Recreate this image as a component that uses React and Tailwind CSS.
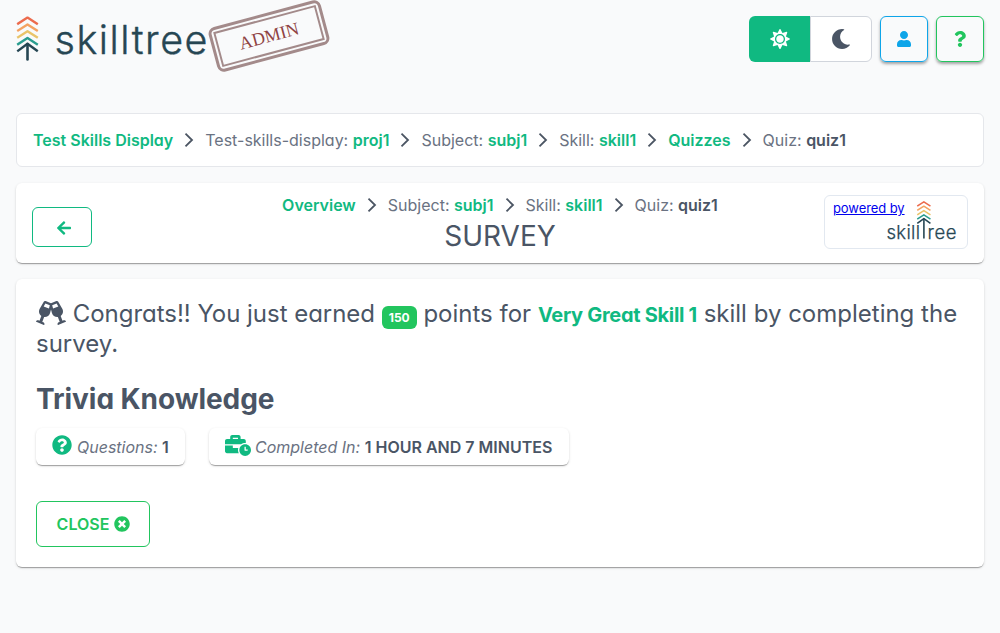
import React from 'react';
import { FaSun, FaMoon, FaUser, FaQuestion, FaArrowLeft, FaQuestionCircle, FaBusinessTime, FaTimesCircle, FaGlassCheers } from 'react-icons/fa';

const CARD = 'bg-white rounded-md shadow-[0_2px_1px_-1px_rgba(0,0,0,0.2),0_1px_1px_0_rgba(0,0,0,0.14),0_1px_3px_0_rgba(0,0,0,0.12)]';

function Chevrons() {
  return (
    <g fill="none" strokeWidth="2.4" strokeLinecap="square" strokeLinejoin="round">
      <path stroke="#ec6b4d" d="M2.2 7.6 L11.5 1.6 L20.8 7.6" />
      <path stroke="#f4a261" d="M2.2 14.4 L11.5 8.4 L20.8 14.4" />
      <path stroke="#e9c46a" d="M2.2 21.2 L11.5 15.2 L20.8 21.2" />
      <path stroke="#2a9d8f" d="M2.2 28 L11.5 22 L20.8 28" />
      <path stroke="#264653" d="M2.2 34.6 L11.5 27.8 L20.8 34.6" />
    </g>
  );
}

function Logo() {
  return (
    <svg width="194" height="48" viewBox="0 0 194 48" className="block shrink-0">
      <Chevrons />
      <path d="M11.5 28 V43.5" stroke="#264653" strokeWidth="2.6" strokeLinecap="round" />
      <text x="38.5" y="37.5" textLength="153" fontSize="39.5" fontWeight="300" fill="#264653" stroke="#264653" strokeWidth="0.4" strokeLinejoin="round" className="font-['Inter']">skilltree</text>
    </svg>
  );
}

function SmallLogo() {
  return (
    <svg width="72" height="42" viewBox="0 0 72 42" className="block">
      <g transform="translate(30.5 0.8) scale(0.64)"><Chevrons /></g>
      <path d="M37.9 18.5 V38.5" stroke="#264653" strokeWidth="1.6" />
      <text x="0.5" y="38.7" textLength="33.5" fontSize="18.5" fontWeight="300" fill="#264653" stroke="#264653" strokeWidth="0.25" className="font-['Inter']">skill</text>
      <text x="41.5" y="38.7" textLength="29" fontSize="18.5" fontWeight="300" fill="#264653" stroke="#264653" strokeWidth="0.25" className="font-['Inter']">ree</text>
    </svg>
  );
}

function Stamp() {
  return (
    <div className="absolute left-[211px] top-[13px] flex h-[46px] w-[116px] -rotate-[15deg] rounded-[7px] border-[3.5px] border-[#a38a8a] p-[2px]">
      <div className="flex flex-1 items-center justify-center border-2 border-[#a38a8a] font-['Liberation_Serif'] text-[18px] leading-none text-[#8f4343]">ADMIN</div>
    </div>
  );
}

function Crumbs({ items }) {
  return (
    <div className="flex items-center leading-6">
      {items.map(([label, value, last], i) => (
        <React.Fragment key={i}>
          {i > 0 && (
            <svg width="10" height="16" viewBox="0 0 10 16" className="mx-[11px]">
              <path d="M1.5 1.7 L8 8 L1.5 14.3" fill="none" stroke="#4b5563" strokeWidth="1.8" />
            </svg>
          )}
          <span className="whitespace-pre text-gray-500">
            {label && label + ' '}
            <span className={last ? 'font-semibold text-gray-600' : 'font-semibold text-[#10b981]'}>{value}</span>
          </span>
        </React.Fragment>
      ))}
    </div>
  );
}

export default function App() {
  return (
    <div className="min-h-[633px] bg-[#f9fafb] px-4 pt-px font-['Inter',sans-serif] text-gray-600 [font-feature-settings:'cv02','cv03','cv04','cv11']">
      <header className="mt-[15px] flex h-[46px] justify-between">
        <div>
          <Logo />
          <Stamp />
        </div>
        <div className="flex gap-2">
          <div className="flex w-[123px]">
            <div className="flex w-[61px] items-center justify-center rounded-l-md bg-[#10b981] text-white"><FaSun size={20} /></div>
            <div className="flex flex-1 items-center justify-center rounded-r-md border border-gray-300 bg-white"><FaMoon size={20} /></div>
          </div>
          <div className="flex w-12 items-center justify-center rounded-md border border-[#0ea5e9] text-[#0ea5e9] shadow-[0_2px_3px_rgba(0,0,0,0.35)]"><FaUser size={16} /></div>
          <div className="flex w-12 items-center justify-center rounded-md border border-[#22c55e] text-[#22c55e] shadow-[0_2px_3px_rgba(0,0,0,0.35)]"><FaQuestion size={16} /></div>
        </div>
      </header>

      <nav className="mt-[51px] flex h-[54px] items-center rounded-md border border-gray-200 bg-white px-4">
        <Crumbs items={[['', 'Test Skills Display'], ['Test-skills-display:', 'proj1'], ['Subject:', 'subj1'], ['Skill:', 'skill1'], ['', 'Quizzes'], ['Quiz:', 'quiz1', true]]} />
      </nav>

      <section className={`${CARD} mt-4 flex h-[80px] justify-between px-4`}>
        <div className="w-36 pt-6">
          <div className="flex h-10 w-[60px] items-center justify-center rounded-md border border-[#10b981] pl-1 pt-px text-[#10b981]"><FaArrowLeft size={16} /></div>
        </div>
        <div className="flex flex-col items-center pt-[10px]">
          <Crumbs items={[['', 'Overview'], ['Subject:', 'subj1'], ['Skill:', 'skill1'], ['Quiz:', 'quiz1', true]]} />
          <h1 className="pt-px text-[28px] leading-9">SURVEY</h1>
        </div>
        <div className="mt-3 flex h-[54px] w-36 rounded-md border border-slate-200 pl-2">
          <span className="pt-[3px] text-[13px] leading-[18px] tracking-[-0.08px] text-[#0000ee] underline">powered by</span>
          <div className="-ml-[19px] mt-[4px]"><SmallLogo /></div>
        </div>
      </section>

      <section className={`${CARD} mt-4 h-[288px] px-5 pt-5`}>
        <p className="text-2xl leading-[30px]">
          <FaGlassCheers className="inline-block h-6 w-[30px] align-[-3px]" /> <span className="tracking-[-0.03px]">Congrats!! You just earned{' '}</span>
          <span className="inline-block rounded-md bg-[#22c55e] px-[7px] align-[0px] text-xs font-bold leading-[23px] text-white">150</span> points for{' '}
          <span className="text-xl font-bold tracking-[-0.3px] text-[#10b981]">Very Great Skill 1</span> skill by completing the survey.
        </p>
        <h2 className="mt-[22px] text-[28px] font-bold leading-[36px] tracking-[-0.06px]">Trivia Knowledge</h2>
        <div className="mt-[11px] flex gap-6">
          <div className={`${CARD} flex h-[37px] w-[149px] items-center px-4`}>
            <FaQuestionCircle size={20} className="mb-1 mr-[5px] text-[#10b981]" />
            <span className="whitespace-pre italic text-gray-500">Questions: </span><b className="font-semibold">1</b>
          </div>
          <div className={`${CARD} flex h-[37px] w-[360px] items-center whitespace-pre px-4`}>
            <FaBusinessTime size={26} className="mb-[3px] mr-1 h-[21px] w-[26px] text-[#10b981]" />
            <span className="italic text-gray-500">Completed In: </span><b className="font-semibold">1 HOUR AND 7 MINUTES</b>
          </div>
        </div>
        <div className="mt-9 flex h-[46px] w-[114px] items-center justify-center gap-[5px] rounded-md border border-[#22c55e] pl-px font-semibold text-[#22c55e]">
          CLOSE <FaTimesCircle size={16} />
        </div>
      </section>
    </div>
  );
}
